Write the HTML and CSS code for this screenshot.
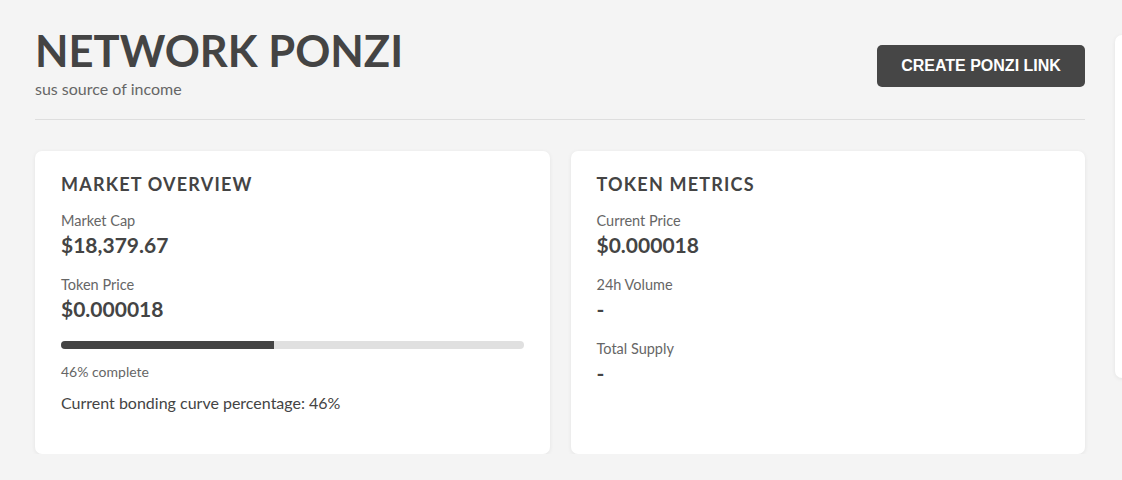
FILE: index.html
```html
<!DOCTYPE html>
<html lang="en">
<head>
<meta charset="utf-8">
<title>Network Ponzi</title>
<link rel="stylesheet" href="styles.css">
</head>
<body>
<div class="page">
  <header class="header">
    <div class="brand">
      <h1 class="title">NETWORK PONZI</h1>
      <p class="subtitle">sus source of income</p>
    </div>
    <button class="cta">CREATE PONZI LINK</button>
  </header>
  <div class="grid">
    <section class="card">
      <h2 class="card-title">MARKET OVERVIEW</h2>
      <div class="stat">
        <div class="label">Market Cap</div>
        <div class="value">$18,379.67</div>
      </div>
      <div class="stat">
        <div class="label">Token Price</div>
        <div class="value">$0.000018</div>
      </div>
      <div class="progress"><div class="progress-fill" style="width:46%"></div></div>
      <div class="progress-text">46% complete</div>
      <p class="note">Current bonding curve percentage: 46%</p>
    </section>
    <section class="card">
      <h2 class="card-title">TOKEN METRICS</h2>
      <div class="stat">
        <div class="label">Current Price</div>
        <div class="value">$0.000018</div>
      </div>
      <div class="stat">
        <div class="label">24h Volume</div>
        <div class="value">-</div>
      </div>
      <div class="stat">
        <div class="label">Total Supply</div>
        <div class="value">-</div>
      </div>
    </section>
  </div>
</div>
<aside class="side-panel"></aside>
</body>
</html>
```
FILE: styles.css
```css
html, body {
  margin: 0;
  padding: 0;
  background: #f4f4f4;
  font-family: "Lato", "DejaVu Sans", sans-serif;
  color: #444;
}
.page {
  width: 1050px;
  margin-left: 35px;
  padding-top: 22px;
}
.header {
  display: flex;
  justify-content: space-between;
  align-items: flex-start;
  padding-bottom: 20px;
  border-bottom: 1px solid #dedede;
}
.title {
  margin: 0;
  font-size: 43.5px;
  font-weight: 700;
  line-height: 56px;
  letter-spacing: 0;
  color: #444;
}
.subtitle {
  margin: 1px 0 0;
  font-size: 16px;
  line-height: 20px;
  color: #666;
}
.cta {
  margin-top: 23px;
  height: 42px;
  width: 208px;
  border: none;
  border-radius: 5px;
  background: #464646;
  color: #fff;
  font-family: "Liberation Sans", Arial, sans-serif;
  font-weight: 700;
  font-size: 16px;
  cursor: pointer;
}
.grid {
  display: grid;
  grid-template-columns: 1fr 1fr;
  gap: 21px;
  margin-top: 31px;
}
.card {
  box-sizing: border-box;
  height: 303px;
  background: #fff;
  border-radius: 7px;
  box-shadow: 0 1px 4px rgba(0,0,0,0.07);
  padding: 22px 26px 26px;
}
.card-title {
  margin: 0 0 17px;
  font-size: 18px;
  line-height: 22px;
  letter-spacing: 1.2px;
  font-weight: 700;
  color: #444;
}
.stat {
  margin-bottom: 16px;
}
.label {
  font-size: 14.5px;
  line-height: 18px;
  color: #666;
}
.value {
  font-size: 21px;
  line-height: 30px;
  font-weight: 700;
  color: #444;
}
.progress {
  height: 8px;
  border-radius: 4px;
  background: #e0e0e0;
  overflow: hidden;
  margin-top: 17px;
}
.progress-fill {
  height: 100%;
  background: #444;
}
.progress-text {
  margin-top: 14px;
  font-size: 14px;
  line-height: 18px;
  color: #666;
}
.note {
  margin: 11px 0 0;
  font-size: 16px;
  line-height: 22px;
  color: #444;
}
.side-panel {
  position: fixed;
  left: 1115px;
  top: 35px;
  width: 300px;
  height: 343px;
  background: #fff;
  border-radius: 7px;
  box-shadow: 0 1px 4px rgba(0,0,0,0.07);
}
```
